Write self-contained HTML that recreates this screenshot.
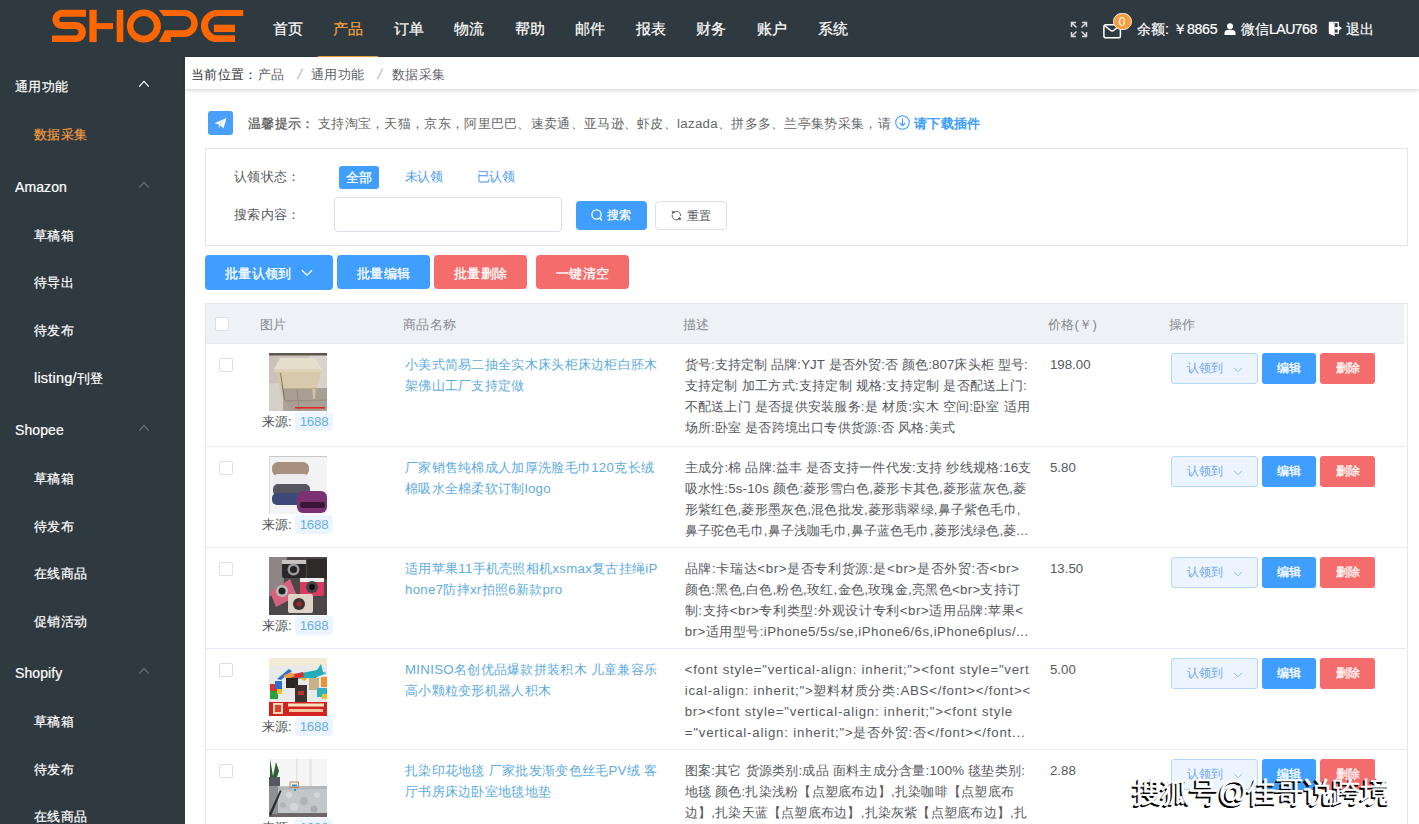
<!DOCTYPE html>
<html><head><meta charset="utf-8">
<style>
*{box-sizing:border-box;margin:0;padding:0}
html,body{width:1419px;height:824px;overflow:hidden;background:#fff;font-family:"Liberation Sans",sans-serif;}
.a{position:absolute;white-space:nowrap}
#hd{position:absolute;left:0;top:0;width:1419px;height:57px;background:#2f3a40}
#sb{position:absolute;left:0;top:57px;width:185px;height:767px;background:#2f3a40}
.nav{font-size:15.14px;line-height:20px;color:#fff;top:19px;-webkit-text-stroke:0.2px currentColor}
.sbh{font-size:13.25px;line-height:22px;color:#fff;left:15px;letter-spacing:0.3px;-webkit-text-stroke:0.2px currentColor}
.lat{font-size:14px;letter-spacing:0.1px}
.sbi{font-size:13.25px;line-height:22px;color:#fff;left:34px;letter-spacing:0.3px;-webkit-text-stroke:0.2px currentColor}
.chev{position:absolute;left:139px;width:8px;height:8px;border-left:1.3px solid #8d949a;border-top:1.3px solid #8d949a;transform:rotate(45deg)}
#bc{position:absolute;left:185px;top:57px;width:1234px;height:32px;background:#fff;box-shadow:0 1px 4px rgba(0,0,0,.2)}
.t13{font-size:13.25px;line-height:22px;letter-spacing:0.3px}
.btn{position:absolute;border-radius:4px;color:#fff;text-align:center;font-size:13.25px}

.cb{position:absolute;width:14px;height:14px;border:1px solid #dcdfe6;border-radius:2px;background:#fff}
.th{font-size:13.25px;line-height:22px;color:#86898e;letter-spacing:0.3px}
.td{font-size:13.25px;line-height:22px}
.nm{color:#5eabe0;letter-spacing:0.3px}
.ds{color:#56595e}
.tag{height:19px;width:38px;border-radius:4px;background:#ecf5ff;color:#66aeea;letter-spacing:-0.2px;font-size:13.25px;line-height:19px;text-align:center}
.rl{height:31px;width:87px;border:1px solid #b3d8ff;border-radius:3px;background:#ecf5ff;color:#6fa6ee;font-size:12.3px;line-height:29px;padding-left:15px}
.sm{height:31px;line-height:31px;font-size:12.3px;border-radius:3px;-webkit-text-stroke:0.3px #fff}
.wb{-webkit-text-stroke:0.3px #fff}
</style></head><body>
<div id="hd">
  <svg class="a" style="left:0;top:0" width="260" height="57" viewBox="0 0 260 57">
    <g fill="#ff6600">
      <!-- S -->
      <path d="M86 9.8 H62 A9.65 9.65 0 0 0 62 29.1 H76 A3.2 3.2 0 0 1 76 35.4 H52 V42.1 H76 A10 10 0 0 0 76 22.1 H62 A2.7 2.7 0 0 1 62 16.7 H86 Z"/>
      <!-- H -->
      <rect x="89.4" y="9.8" width="7.3" height="32.3"/>
      <rect x="96" y="23.1" width="17" height="6"/>
      <rect x="116.7" y="9.8" width="6.6" height="32.3"/>
      <!-- O -->
      <path fill-rule="evenodd" d="M143.9 9.6 A17 16.5 0 1 1 143.9 42.6 A17 16.5 0 1 1 143.9 9.6 Z M143.6 16 A10.3 9.85 0 1 0 143.6 35.7 A10.3 9.85 0 1 0 143.6 16 Z"/>
      <!-- P -->
      <path d="M158.9 10 H184.2 A13.5 13.5 0 0 1 184.2 37 H170.8 V42.1 H158.9 L164.9 30.2 H184.2 A7.1 7.1 0 0 0 184.2 16 H163.5 Z"/>
      <!-- E -->
      <path d="M243.2 10 H217 A16 16 0 0 0 217 42.1 H235 V35.2 H217.6 A9.6 9.6 0 0 1 217.6 16 H243.2 Z"/>
      <rect x="213.9" y="24.7" width="21.1" height="7.3"/>
    </g>
  </svg>
  <div class="a nav" style="left:273px">首页</div>
  <div class="a nav" style="left:333px;color:#f7a13d">产品</div>
  <div class="a" style="left:318px;top:55.6px;width:60px;height:1.4px;background:#f7a13d"></div>
  <div class="a nav" style="left:393.5px">订单</div>
  <div class="a nav" style="left:454px">物流</div>
  <div class="a nav" style="left:514.5px">帮助</div>
  <div class="a nav" style="left:575px">邮件</div>
  <div class="a nav" style="left:635.5px">报表</div>
  <div class="a nav" style="left:696px">财务</div>
  <div class="a nav" style="left:756.5px">账户</div>
  <div class="a nav" style="left:817.5px">系统</div>

  <!-- fullscreen icon -->
  <svg class="a" style="left:1070px;top:21px" width="18" height="17" viewBox="0 0 18 17" fill="none" stroke="#d8dadc" stroke-width="1.5">
    <path d="M1.5 6 V1.5 H6 M1.5 1.5 L6.5 6.5"/>
    <path d="M16.5 6 V1.5 H12 M16.5 1.5 L11.5 6.5"/>
    <path d="M1.5 11 V15.5 H6 M1.5 15.5 L6.5 10.5"/>
    <path d="M16.5 11 V15.5 H12 M16.5 15.5 L11.5 10.5"/>
  </svg>
  <!-- mail icon -->
  <svg class="a" style="left:1102px;top:23px" width="20" height="16" viewBox="0 0 20 16" fill="none" stroke="#fff" stroke-width="1.5">
    <rect x="1.9" y="1.8" width="16.5" height="12.9" rx="1.8"/>
    <path d="M2.6 2.6 L8.6 7.4 Q10.2 8.6 11.8 7.4 L17.6 2.6"/>
  </svg>
  <div class="a" style="left:1112.5px;top:12.5px;width:19px;height:17px;border-radius:9px;background:#f89c3c;border:1px solid #f4f0ea;color:#fff;font-size:12.5px;line-height:16.5px;text-align:center">0</div>
  <div class="a" style="left:1137px;top:19px;font-size:14.2px;line-height:20px;color:#fff;-webkit-text-stroke:0.2px #fff">余额: ￥<span style="letter-spacing:-0.3px">8865</span></div>
  <svg class="a" style="left:1224px;top:23px" width="12" height="12" viewBox="0 0 12 12" fill="#fff">
    <circle cx="6" cy="3.2" r="3"/>
    <path d="M0.5 12 V10 C0.5 7.5 3 6.8 6 6.8 C9 6.8 11.5 7.5 11.5 10 V12 Z"/>
  </svg>
  <div class="a" style="left:1241px;top:19px;font-size:14.2px;line-height:20px;color:#fff;-webkit-text-stroke:0.2px #fff">微信<span style="letter-spacing:-0.6px">LAU768</span></div>
  <svg class="a" style="left:1328px;top:21px" width="15" height="16" viewBox="0 0 15 16">
    <path d="M1.5 1.5 H10.3 V12.2 H6.5" fill="none" stroke="#e6e8ea" stroke-width="1.4"/>
    <path d="M0.8 0.9 L6.7 2.6 V15 L0.8 12.8 Z" fill="#fff"/>
    <rect x="6.7" y="6.1" width="4" height="2.3" fill="#fff"/>
    <path d="M10.2 4.6 L14 7.3 L10.2 10 Z" fill="#fff"/>
  </svg>
  <div class="a" style="left:1346px;top:19px;font-size:14.2px;line-height:20px;color:#fff;-webkit-text-stroke:0.2px #fff">退出</div>
</div>

<div id="sb">
  <div class="a sbh" style="top:19px">通用功能</div>
<svg class="a" style="left:138px;top:22.5px" width="12" height="8" viewBox="0 0 12 8" fill="none" stroke="#fff" stroke-width="1.15"><path d="M1.2 6.6 L6 1.4 L10.8 6.6"/></svg>
  <div class="a sbi" style="top:67px;color:#f39a3f">数据采集</div>
  <div class="a sbh lat" style="top:119px">Amazon</div>
<svg class="a" style="left:138px;top:123.6px" width="12" height="8" viewBox="0 0 12 8" fill="none" stroke="#66737a" stroke-width="1.15"><path d="M1.2 6.6 L6 1.4 L10.8 6.6"/></svg>
  <div class="a sbi" style="top:168px">草稿箱</div>
  <div class="a sbi" style="top:215px">待导出</div>
  <div class="a sbi" style="top:263px">待发布</div>
  <div class="a sbi" style="top:310px"><span style="font-size:14.5px;letter-spacing:0.2px">listing/</span>刊登</div>
  <div class="a sbh lat" style="top:362px">Shopee</div>
<svg class="a" style="left:138px;top:366.6px" width="12" height="8" viewBox="0 0 12 8" fill="none" stroke="#66737a" stroke-width="1.15"><path d="M1.2 6.6 L6 1.4 L10.8 6.6"/></svg>
  <div class="a sbi" style="top:411px">草稿箱</div>
  <div class="a sbi" style="top:459px">待发布</div>
  <div class="a sbi" style="top:506px">在线商品</div>
  <div class="a sbi" style="top:554px">促销活动</div>
  <div class="a sbh lat" style="top:605px">Shopify</div>
<svg class="a" style="left:138px;top:609.6px" width="12" height="8" viewBox="0 0 12 8" fill="none" stroke="#66737a" stroke-width="1.15"><path d="M1.2 6.6 L6 1.4 L10.8 6.6"/></svg>
  <div class="a sbi" style="top:654px">草稿箱</div>
  <div class="a sbi" style="top:702px">待发布</div>
  <div class="a sbi" style="top:749px">在线商品</div>
</div>

<div id="bc">
  <div class="a t13" style="left:6px;top:7px;color:#303133">当前位置：<span style="color:#606266">产品</span></div>
  <svg class="a" style="left:110.5px;top:11px" width="8" height="12" viewBox="0 0 8 12"><path d="M6.6 0.6 L1.4 11.4" stroke="#c4c8ce" stroke-width="1.5"/></svg>
  <div class="a t13" style="left:126px;top:7px;color:#606266">通用功能</div>
  <svg class="a" style="left:190.5px;top:11px" width="8" height="12" viewBox="0 0 8 12"><path d="M6.6 0.6 L1.4 11.4" stroke="#c4c8ce" stroke-width="1.5"/></svg>
  <div class="a t13" style="left:207px;top:7px;color:#606266">数据采集</div>
</div>


<!-- tip -->
<div class="a" style="left:208px;top:111px;width:25px;height:24px;background:#48a0fb;border-radius:3px">
  <svg width="25" height="24" viewBox="0 0 25 24"><path d="M6.5 12.2 L18.5 7 L15.5 17.5 L12.5 14.2 L11 17 L10.6 13.3 Z" fill="#fff"/><path d="M10.6 13.3 L17.5 8 L12.5 14.2" fill="#cfe4fb"/></svg>
</div>
<div class="a t13" style="left:248px;top:113px;color:#555;-webkit-text-stroke:0.25px #555">温馨提示：</div>
<div class="a t13" style="left:318px;top:113px;color:#666">支持淘宝，天猫，京东，阿里巴巴、速卖通、亚马逊、虾皮、lazada、拼多多、兰亭集势采集，请</div>
<svg class="a" style="left:895px;top:115px" width="15" height="15" viewBox="0 0 15 15" fill="none" stroke="#409eff" stroke-width="1.1"><circle cx="7.5" cy="7.5" r="6.8"/><path d="M7.5 3.5 V10.5 M4.8 8 L7.5 10.7 L10.2 8"/></svg>
<div class="a t13" style="left:914px;top:113px;color:#409eff;font-weight:700">请下载插件</div>

<!-- filter box -->
<div class="a" style="left:205px;top:148px;width:1203px;height:98px;border:1px solid #e2e5ea"></div>
<div class="a t13" style="left:234px;top:166px;color:#55585d">认领状态：</div>
<div class="a" style="left:339px;top:166px;width:40px;height:23px;background:#409eff;border-radius:3px;color:#fff;font-size:13.25px;line-height:23px;text-align:center;-webkit-text-stroke:0.3px #fff">全部</div>
<div class="a t13" style="left:404.5px;top:166px;color:#4a9cf5;letter-spacing:-0.4px">未认领</div>
<div class="a t13" style="left:476.5px;top:166px;color:#4a9cf5;letter-spacing:-0.4px">已认领</div>
<div class="a t13" style="left:234px;top:204px;color:#55585d">搜索内容：</div>
<div class="a" style="left:334px;top:197px;width:228px;height:35px;border:1px solid #dcdfe6;border-radius:4px"></div>
<div class="btn" style="left:576px;top:201px;width:71px;height:29px;background:#409eff"></div>
<svg class="a" style="left:591px;top:209px" width="12" height="13" viewBox="0 0 12 13" fill="none" stroke="#fff" stroke-width="1.3"><circle cx="5.5" cy="5.5" r="4.6"/><path d="M8.8 9 L11 11.5"/></svg>
<div class="a" style="left:607px;top:205px;font-size:12.3px;line-height:20px;color:#fff;-webkit-text-stroke:0.25px #fff">搜索</div>
<div class="btn" style="left:655px;top:201px;width:72px;height:29px;background:#fff;border:1px solid #dcdfe6"></div>
<svg class="a" style="left:671px;top:210px" width="11" height="11" viewBox="0 0 11 11" fill="none" stroke="#5a5d62" stroke-width="0.95"><path d="M2.6 2.4 A4.2 4.2 0 0 1 9.6 6.0"/><path d="M8.4 8.6 A4.2 4.2 0 0 1 1.2 4.8"/><path d="M1.0 1.2 L3.8 2.0 L1.6 4.0 Z" fill="#5a5d62" stroke-width="0.5"/><path d="M9.6 9.8 L6.8 9.0 L9.0 7.0 Z" fill="#5a5d62" stroke-width="0.5"/></svg>
<div class="a" style="left:687px;top:206px;font-size:12.3px;line-height:20px;color:#55585d">重置</div>

<!-- batch buttons -->
<div class="btn" style="left:205px;top:255px;width:128px;height:35px;background:#409eff"></div>
<div class="a t13 wb" style="left:225px;top:263px;color:#fff">批量认领到</div>
<svg class="a" style="left:301px;top:269px" width="12" height="8" viewBox="0 0 12 8" fill="none" stroke="#fff" stroke-width="1.3"><path d="M1 1.2 L6 6.2 L11 1.2"/></svg>
<div class="btn" style="left:337px;top:255px;width:93px;height:34px;background:#409eff"></div>
<div class="a t13" style="left:357px;top:263px;color:#fff;-webkit-text-stroke:0.3px #fff">批量编辑</div>
<div class="btn" style="left:434px;top:255px;width:93px;height:34px;background:#f56c6c"></div>
<div class="a t13" style="left:454px;top:263px;color:#fff;-webkit-text-stroke:0.3px #fff">批量删除</div>
<div class="btn" style="left:536px;top:255px;width:93px;height:34px;background:#f56c6c"></div>
<div class="a t13" style="left:556px;top:263px;color:#fff;-webkit-text-stroke:0.3px #fff">一键清空</div>

<div class="a" style="left:205px;top:303px;width:1203px;height:521px;border:1px solid #e3e8ee;border-bottom:none"></div>
<div class="a" style="left:206px;top:304px;width:1198px;height:40px;background:#eef1f6;border-bottom:1px solid #e6eaf2"></div>
<div class="cb" style="left:215px;top:317px"></div>
<div class="a th" style="left:260px;top:314px">图片</div>
<div class="a th" style="left:403px;top:314px">商品名称</div>
<div class="a th" style="left:683px;top:314px">描述</div>
<div class="a th" style="left:1048px;top:314px">价格(￥)</div>
<div class="a th" style="left:1169px;top:314px">操作</div>
<div class="cb" style="left:219px;top:358px"></div>
<div class="a" style="left:269px;top:353px;width:58px;height:58px;overflow:hidden"><svg width="58" height="58" viewBox="0 0 58 58">
<defs><filter id="bl1"><feGaussianBlur stdDeviation="0.6"/></filter></defs>
<g filter="url(#bl1)">
<rect width="58" height="58" fill="#cbc3ba"/>
<rect x="40" y="0" width="18" height="58" fill="#d9d3cc"/>
<rect x="0" y="30" width="16" height="28" fill="#d6d0ca"/>
<rect x="14" y="35" width="44" height="23" fill="#aea49a"/>
<path d="M14 35 L58 35 L58 58 L20 58 Z" fill="#a89e94"/>
<path d="M28 36 L30 58 M14 48 L58 47" stroke="#8f857c" stroke-width="0.8"/>
<rect x="0" y="0" width="58" height="2.5" fill="#5f554b"/>
<path d="M5 16 L11 5 L46 5 L53 16 Z" fill="#e7dfcd"/>
<path d="M5 16 L53 16 L52 20 L6 20 Z" fill="#ded2b8"/>
<path d="M7 19 L52 19 L48 35 L14 35 Z" fill="#d6c9ac"/>
<path d="M10 20 L12 20 L16 47 L14 47 Z" fill="#7c6f5c"/>
<path d="M8 19 L11 19 L15 48 L13 48 Z" fill="#d4c6a6"/>
<path d="M43 34 L47 34 L46 46 L44 46 Z" fill="#cfc1a2"/>
<path d="M14 35 L48 35 L47 36 L15 36 Z" fill="#bfb093"/>
</g>
<rect x="26" y="54" width="30" height="1.6" fill="#e02828"/>
</svg></div>
<div class="a td" style="left:262px;top:410.5px;color:#4d5055">来源:</div>
<div class="a tag" style="left:295px;top:412px">1688</div>
<div class="a td nm" style="left:405px;top:354px">小美式简易二抽全实木床头柜床边柜白胚木</div>
<div class="a td nm" style="left:405px;top:375px">架佛山工厂支持定做</div>
<div class="a td ds" style="left:684.7px;top:354px;letter-spacing:0.129px">货号:支持定制 品牌:YJT 是否外贸:否 颜色:807床头柜 型号:</div>
<div class="a td ds" style="left:684.7px;top:375px;letter-spacing:0.269px">支持定制 加工方式:支持定制 规格:支持定制 是否配送上门:</div>
<div class="a td ds" style="left:684.7px;top:396px;letter-spacing:0.243px">不配送上门 是否提供安装服务:是 材质:实木 空间:卧室 适用</div>
<div class="a td ds" style="left:684.7px;top:417px;letter-spacing:0.204px">场所:卧室 是否跨境出口专供货源:否 风格:美式</div>
<div class="a td ds" style="left:1050px;top:354px">198.00</div>
<div class="a rl" style="left:1171px;top:353px">认领到<svg style="position:absolute;left:61px;top:13px" width="10" height="6" viewBox="0 0 10 6" fill="none" stroke="#8fb9ec" stroke-width="1"><path d="M1 0.8 L5 4.8 L9 0.8"/></svg></div>
<div class="btn sm" style="left:1262px;top:353px;width:54px;background:#409eff">编辑</div>
<div class="btn sm" style="left:1320px;top:353px;width:55px;background:#f56c6c">删除</div>
<div class="a" style="left:206px;top:446px;width:1200px;height:1px;background:#e6eaf2"></div>
<div class="cb" style="left:219px;top:461px"></div>
<div class="a" style="left:269px;top:456px;width:58px;height:58px;overflow:hidden"><svg width="58" height="58" viewBox="0 0 58 58">
<defs><filter id="bl2"><feGaussianBlur stdDeviation="0.5"/></filter></defs>
<rect width="58" height="58" fill="#f3f3f5"/>
<rect width="58" height="1" fill="#c8c8c8"/><rect width="1" height="58" fill="#d8d8d8"/>
<g filter="url(#bl2)">
<rect x="3" y="6" width="37" height="14" rx="6" fill="#a8907f"/>
<rect x="4" y="18" width="36" height="12" rx="5" fill="#ecebef"/>
<rect x="4" y="28" width="37" height="12" rx="5" fill="#55575f"/>
<rect x="3" y="37" width="35" height="12" rx="5" fill="#3e4a78"/>
<rect x="28" y="35" width="30" height="22" rx="6" fill="#7c3172"/>
<rect x="31" y="46" width="25" height="6" rx="2" fill="#3b1838"/>
</g>
</svg></div>
<div class="a td" style="left:262px;top:513.5px;color:#4d5055">来源:</div>
<div class="a tag" style="left:295px;top:515px">1688</div>
<div class="a td nm" style="left:405px;top:457px">厂家销售纯棉成人加厚洗脸毛巾120克长绒</div>
<div class="a td nm" style="left:405px;top:478px">棉吸水全棉柔软订制logo</div>
<div class="a td ds" style="left:684.7px;top:457px;letter-spacing:0.232px">主成分:棉 品牌:益丰 是否支持一件代发:支持 纱线规格:16支</div>
<div class="a td ds" style="left:684.7px;top:478px;letter-spacing:0.197px">吸水性:5s-10s 颜色:菱形雪白色,菱形卡其色,菱形蓝灰色,菱</div>
<div class="a td ds" style="left:684.7px;top:499px;letter-spacing:0.189px">形紫红色,菱形墨灰色,混色批发,菱形翡翠绿,鼻子紫色毛巾,</div>
<div class="a td ds" style="left:684.7px;top:520px;letter-spacing:0.180px">鼻子驼色毛巾,鼻子浅咖毛巾,鼻子蓝色毛巾,菱形浅绿色,菱...</div>
<div class="a td ds" style="left:1050px;top:457px">5.80</div>
<div class="a rl" style="left:1171px;top:456px">认领到<svg style="position:absolute;left:61px;top:13px" width="10" height="6" viewBox="0 0 10 6" fill="none" stroke="#8fb9ec" stroke-width="1"><path d="M1 0.8 L5 4.8 L9 0.8"/></svg></div>
<div class="btn sm" style="left:1262px;top:456px;width:54px;background:#409eff">编辑</div>
<div class="btn sm" style="left:1320px;top:456px;width:55px;background:#f56c6c">删除</div>
<div class="a" style="left:206px;top:547px;width:1200px;height:1px;background:#e6eaf2"></div>
<div class="cb" style="left:219px;top:562px"></div>
<div class="a" style="left:269px;top:557px;width:58px;height:58px;overflow:hidden"><svg width="58" height="58" viewBox="0 0 58 58">
<defs><filter id="bl3"><feGaussianBlur stdDeviation="0.5"/></filter></defs>
<g filter="url(#bl3)">
<rect width="58" height="58" fill="#4b4749"/>
<path d="M0 0 L18 0 L14 30 L0 40 Z" fill="#8e8586"/>
<rect x="38" y="2" width="20" height="20" fill="#2e2b2c"/>
<rect x="13" y="3" width="24" height="18" rx="2" fill="#2a2829"/>
<rect x="13" y="3" width="24" height="4" fill="#c8c4c4"/>
<circle cx="24.5" cy="12.5" r="6" fill="#9a9a9a"/><circle cx="24.5" cy="12.5" r="3.5" fill="#222"/>
<rect x="31" y="21" width="24" height="18" rx="2" fill="#d83a5e"/>
<rect x="31" y="21" width="24" height="4" fill="#eee"/>
<circle cx="43" cy="30" r="6" fill="#444"/><circle cx="43" cy="30" r="3" fill="#111"/>
<path d="M1 35 L21 22 L28 39 L7 50 Z" fill="#d8607f"/>
<circle cx="13" cy="34" r="6" fill="#bbb"/><circle cx="13" cy="34" r="3.5" fill="#222"/>
<rect x="19" y="37" width="25" height="19" rx="2" fill="#ddd3c7"/>
<circle cx="30" cy="47" r="6" fill="#3a3030"/><circle cx="30" cy="47" r="2.5" fill="#b02030"/>
</g>
</svg></div>
<div class="a td" style="left:262px;top:614.5px;color:#4d5055">来源:</div>
<div class="a tag" style="left:295px;top:616px">1688</div>
<div class="a td nm" style="left:405px;top:558px">适用苹果11手机壳照相机xsmax复古挂绳iP</div>
<div class="a td nm" style="left:405px;top:579px">hone7防摔xr拍照6新款pro</div>
<div class="a td ds" style="left:684.7px;top:558px;letter-spacing:0.652px">品牌:卡瑞达&lt;br&gt;是否专利货源:是&lt;br&gt;是否外贸:否&lt;br&gt;</div>
<div class="a td ds" style="left:684.7px;top:579px;letter-spacing:0.300px">颜色:黑色,白色,粉色,玫红,金色,玫瑰金,亮黑色&lt;br&gt;支持订</div>
<div class="a td ds" style="left:684.7px;top:600px;letter-spacing:0.600px">制:支持&lt;br&gt;专利类型:外观设计专利&lt;br&gt;适用品牌:苹果&lt;</div>
<div class="a td ds" style="left:684.7px;top:621px;letter-spacing:0.489px">br&gt;适用型号:iPhone5/5s/se,iPhone6/6s,iPhone6plus/...</div>
<div class="a td ds" style="left:1050px;top:558px">13.50</div>
<div class="a rl" style="left:1171px;top:557px">认领到<svg style="position:absolute;left:61px;top:13px" width="10" height="6" viewBox="0 0 10 6" fill="none" stroke="#8fb9ec" stroke-width="1"><path d="M1 0.8 L5 4.8 L9 0.8"/></svg></div>
<div class="btn sm" style="left:1262px;top:557px;width:54px;background:#409eff">编辑</div>
<div class="btn sm" style="left:1320px;top:557px;width:55px;background:#f56c6c">删除</div>
<div class="a" style="left:206px;top:648px;width:1200px;height:1px;background:#e6eaf2"></div>
<div class="cb" style="left:219px;top:663px"></div>
<div class="a" style="left:269px;top:658px;width:58px;height:58px;overflow:hidden"><svg width="58" height="58" viewBox="0 0 58 58">
<defs><filter id="bl4"><feGaussianBlur stdDeviation="0.45"/></filter></defs>
<g filter="url(#bl4)">
<rect width="58" height="58" fill="#e7eae8"/>
<rect width="58" height="8" fill="#f4ebd6"/>
<path d="M22 17 L48 12 L52 6 L54 14 L58 15 L48 19 L42 25 L40 20 L26 21 Z" fill="#27adbb"/>
<path d="M20 17 L34 14 L35 19 L22 21 Z" fill="#d83030"/>
<path d="M30 20 L38 20 L36 23 Z" fill="#f0b020"/>
<path d="M8 21 L20 11 L23 13 L12 22 Z" fill="#2a6fd0"/>
<path d="M14 18 L22 14 L26 18 L18 21 Z" fill="#f3a040"/>
<rect x="1" y="26" width="7" height="8" fill="#d93030"/>
<rect x="6" y="23" width="7" height="8" fill="#2a6fd0"/>
<rect x="1" y="33" width="8" height="8" fill="#2aa040"/>
<rect x="8" y="31" width="5" height="5" fill="#f0c020"/>
<rect x="17" y="20" width="12" height="10" fill="#2b2526"/>
<rect x="26" y="27" width="12" height="17" fill="#3a3030"/>
<rect x="29" y="33" width="6" height="4" fill="#c03030"/>
<rect x="40" y="20" width="10" height="12" fill="#c9b089"/>
<rect x="48" y="30" width="10" height="9" fill="#30b0c0"/>
<rect x="53" y="36" width="5" height="5" fill="#f0c020"/>
<rect x="52" y="19" width="6" height="10" fill="#f09030"/>
<rect y="44" width="58" height="14" fill="#d42420"/>
<rect x="4" y="45" width="10" height="11" fill="#f5dcb5"/>
<rect x="6" y="47" width="6" height="7" fill="#d84030"/>
<rect x="19" y="45.5" width="36" height="3" fill="#f6e4bd"/>
<rect x="20" y="51" width="34" height="3" fill="#f0c8a0"/>
</g>
</svg></div>
<div class="a td" style="left:262px;top:715.5px;color:#4d5055">来源:</div>
<div class="a tag" style="left:295px;top:717px">1688</div>
<div class="a td nm" style="left:405px;top:659px">MINISO名创优品爆款拼装积木 儿童兼容乐</div>
<div class="a td nm" style="left:405px;top:680px">高小颗粒变形机器人积木</div>
<div class="a td ds" style="left:684.7px;top:659px;letter-spacing:0.756px">&lt;font style="vertical-align: inherit;"&gt;&lt;font style="vert</div>
<div class="a td ds" style="left:684.7px;top:680px;letter-spacing:0.765px">ical-align: inherit;"&gt;塑料材质分类:ABS&lt;/font&gt;&lt;/font&gt;&lt;</div>
<div class="a td ds" style="left:684.7px;top:701px;letter-spacing:0.771px">br&gt;&lt;font style="vertical-align: inherit;"&gt;&lt;font style</div>
<div class="a td ds" style="left:684.7px;top:722px;letter-spacing:0.798px">="vertical-align: inherit;"&gt;是否外贸:否&lt;/font&gt;&lt;/font...</div>
<div class="a td ds" style="left:1050px;top:659px">5.00</div>
<div class="a rl" style="left:1171px;top:658px">认领到<svg style="position:absolute;left:61px;top:13px" width="10" height="6" viewBox="0 0 10 6" fill="none" stroke="#8fb9ec" stroke-width="1"><path d="M1 0.8 L5 4.8 L9 0.8"/></svg></div>
<div class="btn sm" style="left:1262px;top:658px;width:54px;background:#409eff">编辑</div>
<div class="btn sm" style="left:1320px;top:658px;width:55px;background:#f56c6c">删除</div>
<div class="a" style="left:206px;top:749px;width:1200px;height:1px;background:#e6eaf2"></div>
<div class="cb" style="left:219px;top:764px"></div>
<div class="a" style="left:269px;top:759px;width:58px;height:58px;overflow:hidden"><svg width="58" height="58" viewBox="0 0 58 58">
<defs><filter id="bl5"><feGaussianBlur stdDeviation="0.6"/></filter></defs>
<g filter="url(#bl5)">
<rect width="58" height="58" fill="#f5f5f6"/>
<rect x="27" y="0" width="1.5" height="28" fill="#e2e3e5"/>
<rect x="40" y="0" width="3" height="28" fill="#e6e7e9"/>
<rect x="0" y="27" width="58" height="31" fill="#c4c7ca"/>
<path d="M8 28 L58 27 L58 30 L9 31 Z" fill="#b4b7ba"/>
<circle cx="20" cy="36" r="3" fill="#d6d8da"/><circle cx="35" cy="42" r="4" fill="#b0b3b6"/><circle cx="48" cy="36" r="3" fill="#d2d4d6"/><circle cx="25" cy="48" r="4" fill="#d4d6d8"/><circle cx="45" cy="50" r="3.5" fill="#a9acb0"/><circle cx="14" cy="46" r="3" fill="#b2b5b8"/>
<rect x="0" y="54" width="58" height="4" fill="#6c6666"/>
<rect x="0" y="18" width="11" height="9" fill="#55585c"/>
<rect x="0" y="27" width="9" height="28" fill="#8d9094"/>
<path d="M0 55 L11 31 L12.5 32 L2 57 Z" fill="#2e2f33"/>
<path d="M1 0 L4 17 L7 3 L10 12 L8 18 L1 18 Z" fill="#2f5e35"/>
<rect x="21" y="23" width="8.5" height="5.5" fill="none" stroke="#c08050" stroke-width="0.9"/>
<rect x="23" y="25.5" width="5" height="2" fill="#3f90c8"/>
<rect x="25" y="30" width="2" height="2" fill="#2a9aa0"/>
</g>
</svg></div>
<div class="a td" style="left:262px;top:816.5px;color:#4d5055">来源:</div>
<div class="a tag" style="left:295px;top:818px">1688</div>
<div class="a td nm" style="left:405px;top:760px">扎染印花地毯 厂家批发渐变色丝毛PV绒 客</div>
<div class="a td nm" style="left:405px;top:781px">厅书房床边卧室地毯地垫</div>
<div class="a td ds" style="left:684.7px;top:760px;letter-spacing:0.242px">图案:其它 货源类别:成品 面料主成分含量:100% 毯垫类别:</div>
<div class="a td ds" style="left:684.7px;top:781px;letter-spacing:0.235px">地毯 颜色:扎染浅粉【点塑底布边】,扎染咖啡【点塑底布</div>
<div class="a td ds" style="left:684.7px;top:802px;letter-spacing:0.233px">边】,扎染天蓝【点塑底布边】,扎染灰紫【点塑底布边】,扎</div>
<div class="a td ds" style="left:1050px;top:760px">2.88</div>
<div class="a rl" style="left:1171px;top:759px">认领到<svg style="position:absolute;left:61px;top:13px" width="10" height="6" viewBox="0 0 10 6" fill="none" stroke="#8fb9ec" stroke-width="1"><path d="M1 0.8 L5 4.8 L9 0.8"/></svg></div>
<div class="btn sm" style="left:1262px;top:759px;width:54px;background:#409eff">编辑</div>
<div class="btn sm" style="left:1320px;top:759px;width:55px;background:#f56c6c">删除</div>
<div class="a" id="wm" style="left:1133px;top:774px;font-size:29px;line-height:36px;font-weight:400;color:#fff;letter-spacing:-0.6px;-webkit-text-stroke:0.6px #fff;text-shadow:-2px 2px 0 #000,-1.5px 1.5px 0 #000,-1px 1px 0 #000">搜狐号@佳哥说跨境</div>


</body></html>
